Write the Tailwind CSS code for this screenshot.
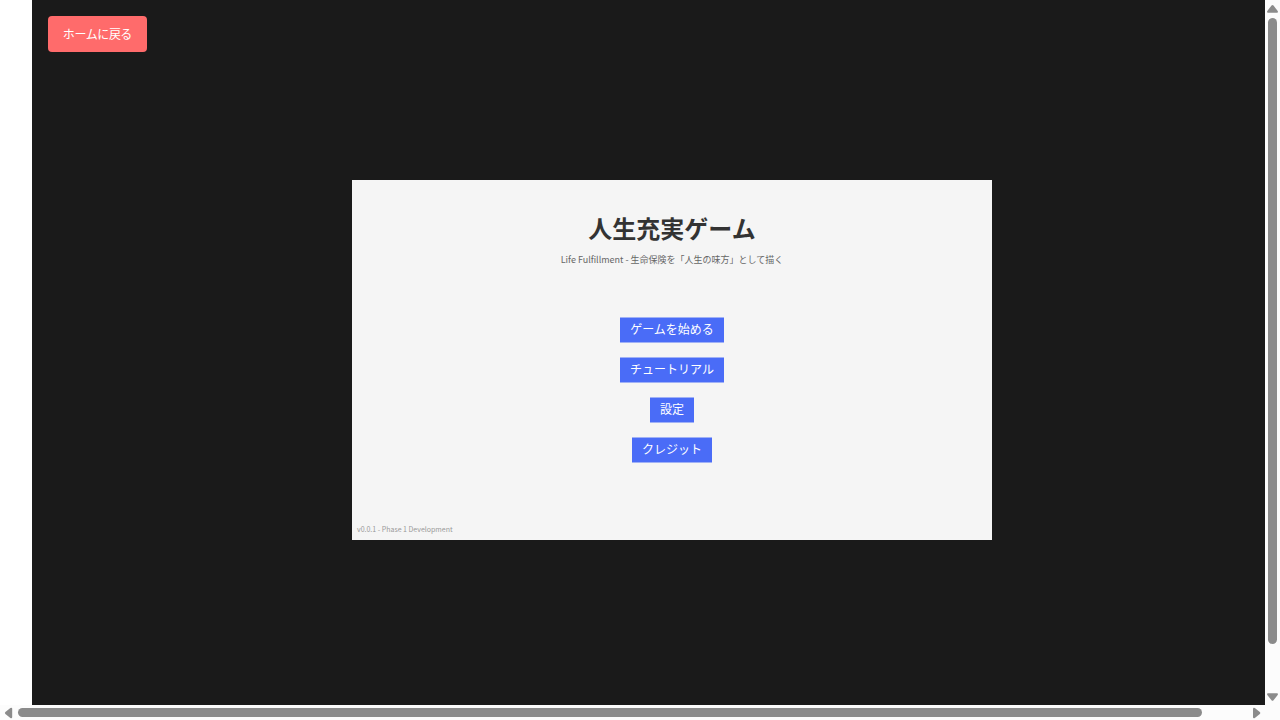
<!DOCTYPE html>
<html lang="ja">
<head>
<meta charset="utf-8">
<meta name="viewport" content="width=device-width, initial-scale=1">
<title>人生充実ゲーム</title>
<script src="https://cdn.jsdelivr.net/npm/@tailwindcss/browser@4"></script>
</head>
<body class="grid h-screen grid-cols-[minmax(0,1fr)_15px] grid-rows-[minmax(0,1fr)_15px] overflow-hidden bg-white font-['Noto_Sans_CJK_JP',sans-serif]">
  <div class="overflow-hidden">
    <main class="relative ml-8 flex h-screen w-screen items-center justify-center bg-[#1a1a1a]">
      <button type="button" class="absolute top-4 left-4 rounded bg-[#ff6b6b] px-[15px] py-2 text-xs leading-5 whitespace-nowrap text-white [font-feature-settings:'palt']">ホームに戻る</button>
      <section class="flex aspect-video w-1/2 flex-col items-center bg-[#f5f5f5]">
        <h1 class="mt-8 text-2xl leading-8 font-bold text-[#333333]">人生充実ゲーム</h1>
        <p class="mt-2 text-[9px] leading-4 text-[#666666]">Life Fulfillment - 生命保険を「人生の味方」として描く</p>
        <nav class="mt-[49px] flex flex-col items-center gap-[14px] text-xs text-white">
          <button type="button" class="h-[26px] border-y border-[#a0b1f6] bg-[#4a6cf7] px-[10px] pb-[2px]">ゲームを始める</button>
          <button type="button" class="h-[26px] border-y border-[#a0b1f6] bg-[#4a6cf7] px-[10px] pb-[2px]">チュートリアル</button>
          <button type="button" class="h-[26px] border-y border-[#a0b1f6] bg-[#4a6cf7] px-[10px] pb-[2px]">設定</button>
          <button type="button" class="h-[26px] border-y border-[#a0b1f6] bg-[#4a6cf7] px-[10px] pb-[2px]">クレジット</button>
        </nav>
        <small class="mt-auto mb-[5px] self-start pl-[5px] text-[7px] leading-3 text-[#999999]">v0.0.1 - Phase 1 Development</small>
      </section>
    </main>
  </div>
  <div class="flex flex-col items-center bg-[#fcfcfc] text-[#8b8b8b]" aria-hidden="true">
    <svg class="h-[18px] w-[15px] shrink-0" viewBox="0 0 15 18" fill="currentColor"><path d="M6.5 5.6Q7.5 4.5 8.5 5.6L12.7 11Q13.4 12.6 12 12.8H3Q1.6 12.6 2.3 11Z"/></svg>
    <div class="flex min-h-0 w-[9px] flex-1 flex-col"><div class="h-[93%] rounded-full bg-[#8b8b8b]"></div></div>
    <svg class="h-[14px] w-[15px] shrink-0" viewBox="0 0 15 14" fill="currentColor"><path d="M3 2.2H12Q13.4 2.4 12.7 4L8.5 9.2Q7.5 10.3 6.5 9.2L2.3 4Q1.6 2.4 3 2.2Z"/></svg>
  </div>
  <div class="flex items-center bg-[#fcfcfc] text-[#8b8b8b]" aria-hidden="true">
    <svg class="h-[15px] w-[18px] shrink-0" viewBox="0 0 18 15" fill="currentColor"><path d="M5.4 9Q4.3 8 5.4 7L10.4 3Q12 2.3 12.2 3.7V12.3Q12 13.7 10.4 13Z"/></svg>
    <div class="h-[9px] min-w-0 flex-1"><div class="h-full w-[96%] rounded-full bg-[#8b8b8b]"></div></div>
    <svg class="h-[15px] w-[14px] shrink-0" viewBox="0 0 14 15" fill="currentColor"><path d="M8.8 9Q9.9 8 8.8 7L3.8 3Q2.2 2.3 2 3.7V12.3Q2.2 13.7 3.8 13Z"/></svg>
  </div>
  <div class="bg-[#fcfcfc]"></div>
</body>
</html>
